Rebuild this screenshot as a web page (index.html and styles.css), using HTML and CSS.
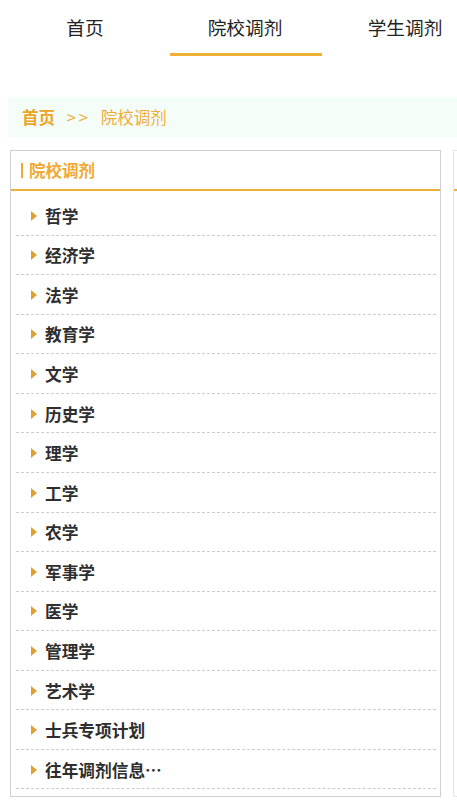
FILE: index.html
```html
<!DOCTYPE html>
<html lang="zh-CN">
<head>
<meta charset="utf-8">
<title>院校调剂</title>
<link rel="stylesheet" href="styles.css">
</head>
<body>
<div class="page">
  <nav class="tabs">
    <a class="tab">首页</a>
    <a class="tab active">院校调剂</a>
    <a class="tab">学生调剂</a>
  </nav>
  <div class="crumb">
    <span class="crumb-home">首页</span>
    <span class="crumb-sep">&gt;&gt;</span>
    <span class="crumb-cur">院校调剂</span>
  </div>
  <div class="cols">
    <div class="box">
      <div class="box-title"><span class="bar"></span>院校调剂</div>
      <ul class="list">
        <li><span class="tri"></span>哲学</li>
        <li><span class="tri"></span>经济学</li>
        <li><span class="tri"></span>法学</li>
        <li><span class="tri"></span>教育学</li>
        <li><span class="tri"></span>文学</li>
        <li><span class="tri"></span>历史学</li>
        <li><span class="tri"></span>理学</li>
        <li><span class="tri"></span>工学</li>
        <li><span class="tri"></span>农学</li>
        <li><span class="tri"></span>军事学</li>
        <li><span class="tri"></span>医学</li>
        <li><span class="tri"></span>管理学</li>
        <li><span class="tri"></span>艺术学</li>
        <li><span class="tri"></span>士兵专项计划</li>
        <li><span class="tri"></span>往年调剂信息…</li>
      </ul>
    </div>
    <div class="box box2">
      <div class="box-title"></div>
    </div>
  </div>
</div>
</body>
</html>
```

FILE: styles.css
```css
html, body {
  margin: 0;
  padding: 0;
  background: #fff;
}
body {
  font-family: "Noto Sans CJK SC", "Noto Sans", sans-serif;
  color: #333;
  overflow: hidden;
}
.page {
  width: 457px;
  height: 810px;
  overflow: hidden;
}
.tabs {
  display: flex;
  padding-left: 5px;
  height: 57px;
  white-space: nowrap;
}
.tab {
  flex: 0 0 160px;
  position: relative;
  text-align: center;
  font-size: 18.7px;
  line-height: 54px;
  color: #222;
}
.tab.active::after {
  content: "";
  position: absolute;
  left: 5px;
  right: 3px;
  top: 53px;
  height: 3px;
  background: #f0b033;
}
.crumb {
  margin: 40px 0 0 8px;
  height: 40px;
  line-height: 40px;
  background: #f5fdf8;
  padding-left: 14px;
  font-size: 16.5px;
  color: #efad3a;
}
.crumb-home {
  font-weight: bold;
  color: #eba424;
}
.crumb-sep {
  margin: 0 6px 0 8px;
  letter-spacing: 3px;
}
.cols {
  display: flex;
  margin-top: 13px;
  padding-left: 10px;
}
.box {
  flex: 0 0 431px;
  box-sizing: border-box;
  border: 1px solid #cfcfcf;
  padding-bottom: 7px;
}
.box2 {
  flex: 0 0 60px;
  margin-left: 12px;
  border-color: #e6e6e6;
}
.box-title {
  height: 38px;
  line-height: 38px;
  border-bottom: 2px solid #eab13a;
  padding-left: 10px;
  font-size: 16.5px;
  font-weight: bold;
  color: #efa935;
  display: flex;
  align-items: center;
}
.bar {
  display: inline-block;
  width: 2px;
  height: 15px;
  background: #efa935;
  margin-right: 6px;
}
.list {
  list-style: none;
  margin: 5px 4px 0 5px;
  padding: 0;
}
.list li {
  box-sizing: border-box;
  height: 39.57px;
  border-bottom: 1px dashed #cccccc;
  display: flex;
  align-items: center;
  padding-left: 15px;
  padding-top: 1px;
  font-size: 16.7px;
  font-weight: bold;
  color: #2e2e2e;
}
.tri {
  width: 0;
  height: 0;
  border-top: 5px solid transparent;
  border-bottom: 5px solid transparent;
  border-left: 6px solid #e0a030;
  margin-right: 8px;
}
```
